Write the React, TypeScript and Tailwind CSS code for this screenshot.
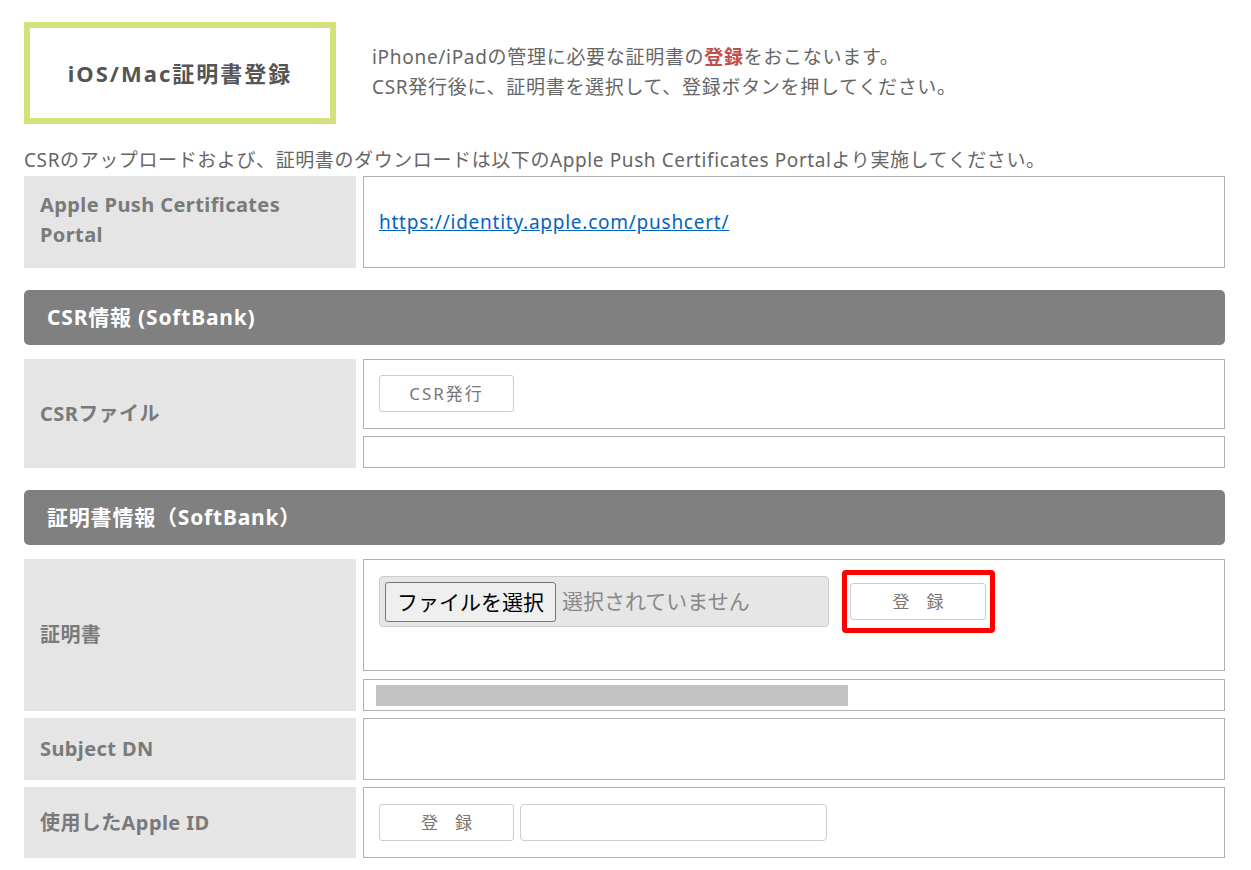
import React from 'react'

const font = { fontFamily: '"Noto Sans", "Noto Sans CJK JP", sans-serif' }

function Label({ children, className = '' }: { children: React.ReactNode; className?: string }) {
  return (
    <div
      className={`w-[332px] shrink-0 bg-[#e5e5e5] pl-[16px] text-[20px] font-bold tracking-[0.4px] text-[#7a7a7a] flex items-center ${className}`}
    >
      {children}
    </div>
  )
}

function Cell({ children, className = '' }: { children?: React.ReactNode; className?: string }) {
  return <div className={`border border-[#b0b0b0] bg-white ${className}`}>{children}</div>
}

function Btn({ children, className = '' }: { children: React.ReactNode; className?: string }) {
  return (
    <button
      className={`h-[37px] w-[135px] rounded-[3px] border border-[#cccccc] bg-white text-[17px] text-[#777] ${className}`}
    >
      {children}
    </button>
  )
}

function SectionHead({ title }: { title: string }) {
  return (
    <div className="mt-[22px] flex h-[55px] items-center rounded-[5px] bg-[#808080] pl-[23px] text-[21px] font-bold tracking-[0.8px] text-white">
      {title}
    </div>
  )
}

export default function App() {
  return (
    <div className="min-h-[870px] bg-white pl-[24px] pr-[26px] pt-[22px]" style={font}>
      {/* Title & description */}
      <div className="flex items-center">
        <div className="flex h-[102px] w-[312px] items-center justify-center border-[6px] border-[#d5e27b] text-[22px] font-bold tracking-[2px] text-[#555]">
          iOS/Mac証明書登録
        </div>
        <div className="ml-[36px] -mt-[2px] text-[19px] leading-[30px] tracking-[0.7px] text-[#666]">
          <p>
            iPhone/iPadの管理に必要な証明書の<span className="font-bold text-[#c0504d]">登録</span>をおこないます。
          </p>
          <p>CSR発行後に、証明書を選択して、登録ボタンを押してください。</p>
        </div>
      </div>

      <p className="mt-[22px] text-[19px] leading-[28px] tracking-[0.6px] text-[#666]">
        CSRのアップロードおよび、証明書のダウンロードは以下のApple Push Certificates Portalより実施してください。
      </p>

      {/* Portal row */}
      <div className="mt-[2px] flex h-[92px] gap-[7px]">
        <Label className="items-start pt-[14px] leading-[30px]">
          Apple Push Certificates
          <br />
          Portal
        </Label>
        <Cell className="flex flex-1 items-center pl-[15px]">
          <a href="#" className="text-[19px] tracking-[0.75px] text-[#0563c1] underline">
            https://identity.apple.com/pushcert/
          </a>
        </Cell>
      </div>

      <SectionHead title="CSR情報 (SoftBank)" />

      <div className="mt-[14px] flex h-[109px] gap-[7px]">
        <Label>CSRファイル</Label>
        <div className="flex flex-1 flex-col gap-[7px]">
          <Cell className="h-[70px] pl-[15px] pt-[15px]">
            <Btn className="tracking-[2px]">CSR発行</Btn>
          </Cell>
          <Cell className="h-[32px]" />
        </div>
      </div>

      <SectionHead title="証明書情報（SoftBank）" />

      <div className="mt-[14px] flex h-[152px] gap-[7px]">
        <Label>証明書</Label>
        <div className="flex flex-1 flex-col gap-[8px]">
          <Cell className="h-[112px] pl-[15px] pt-[10px]">
            <div className="flex items-center gap-[13px]">
              <div className="flex h-[51px] w-[450px] items-center rounded-[4px] border border-[#cccccc] bg-[#e6e6e6] pl-[5px]">
                <button
                  className="h-[40px] w-[171px] rounded-[3px] border border-[#767676] bg-[#efefef] text-[21px] text-black"
                  style={{ fontFamily: '"Noto Sans CJK JP", sans-serif' }}
                >
                  ファイルを選択
                </button>
                <span className="ml-[6px] text-[21px] text-[#888]">選択されていません</span>
              </div>
              <div className="rounded-[4px] border-[5px] border-[#ff0000] pb-[8px] pl-[3px] pr-[4px] pt-[8px]">
                <Btn className="w-[136px]">登　録</Btn>
              </div>
            </div>
          </Cell>
          <Cell className="h-[32px] pl-[12px] pt-[5px]">
            <div className="h-[21px] w-[472px] bg-[#c2c2c2]" />
          </Cell>
        </div>
      </div>

      <div className="mt-[7px] flex h-[62px] gap-[7px]">
        <Label>Subject DN</Label>
        <Cell className="flex-1" />
      </div>

      <div className="mt-[7px] flex h-[71px] gap-[7px]">
        <Label>使用したApple ID</Label>
        <Cell className="flex flex-1 items-center gap-[6px] pl-[15px]">
          <Btn>登　録</Btn>
          <input className="h-[37px] w-[307px] rounded-[4px] border border-[#cccccc] bg-white outline-none" />
        </Cell>
      </div>
    </div>
  )
}
